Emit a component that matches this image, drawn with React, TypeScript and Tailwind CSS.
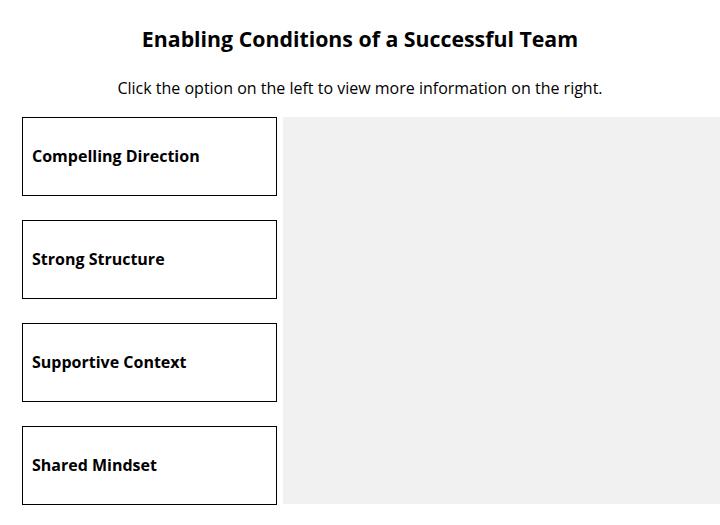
const options = [
  "Compelling Direction",
  "Strong Structure",
  "Supportive Context",
  "Shared Mindset",
];

export default function App() {
  return (
    <div
      className="w-[720px] h-[525px] bg-white text-black overflow-hidden"
      style={{ fontFamily: '"Open Sans", sans-serif' }}
    >
      <h1 className="pt-[25px] text-center text-[21.3px] font-bold leading-[28px]">
        Enabling Conditions of a Successful Team
      </h1>
      <p className="mt-[23px] text-center text-[16px] leading-[24px]">
        Click the option on the left to view more information on the right.
      </p>
      <div className="flex mt-[17px] pl-[22px] gap-[6px]">
        <div className="flex flex-col gap-[24px] w-[255px]">
          {options.map((o) => (
            <button
              key={o}
              className="h-[79px] border border-black bg-white text-left pl-[9px] pb-[1px] text-[16px] font-bold"
            >
              {o}
            </button>
          ))}
        </div>
        <div className="flex-1 bg-[#f1f1f1] h-[387px]"></div>
      </div>
    </div>
  );
}
